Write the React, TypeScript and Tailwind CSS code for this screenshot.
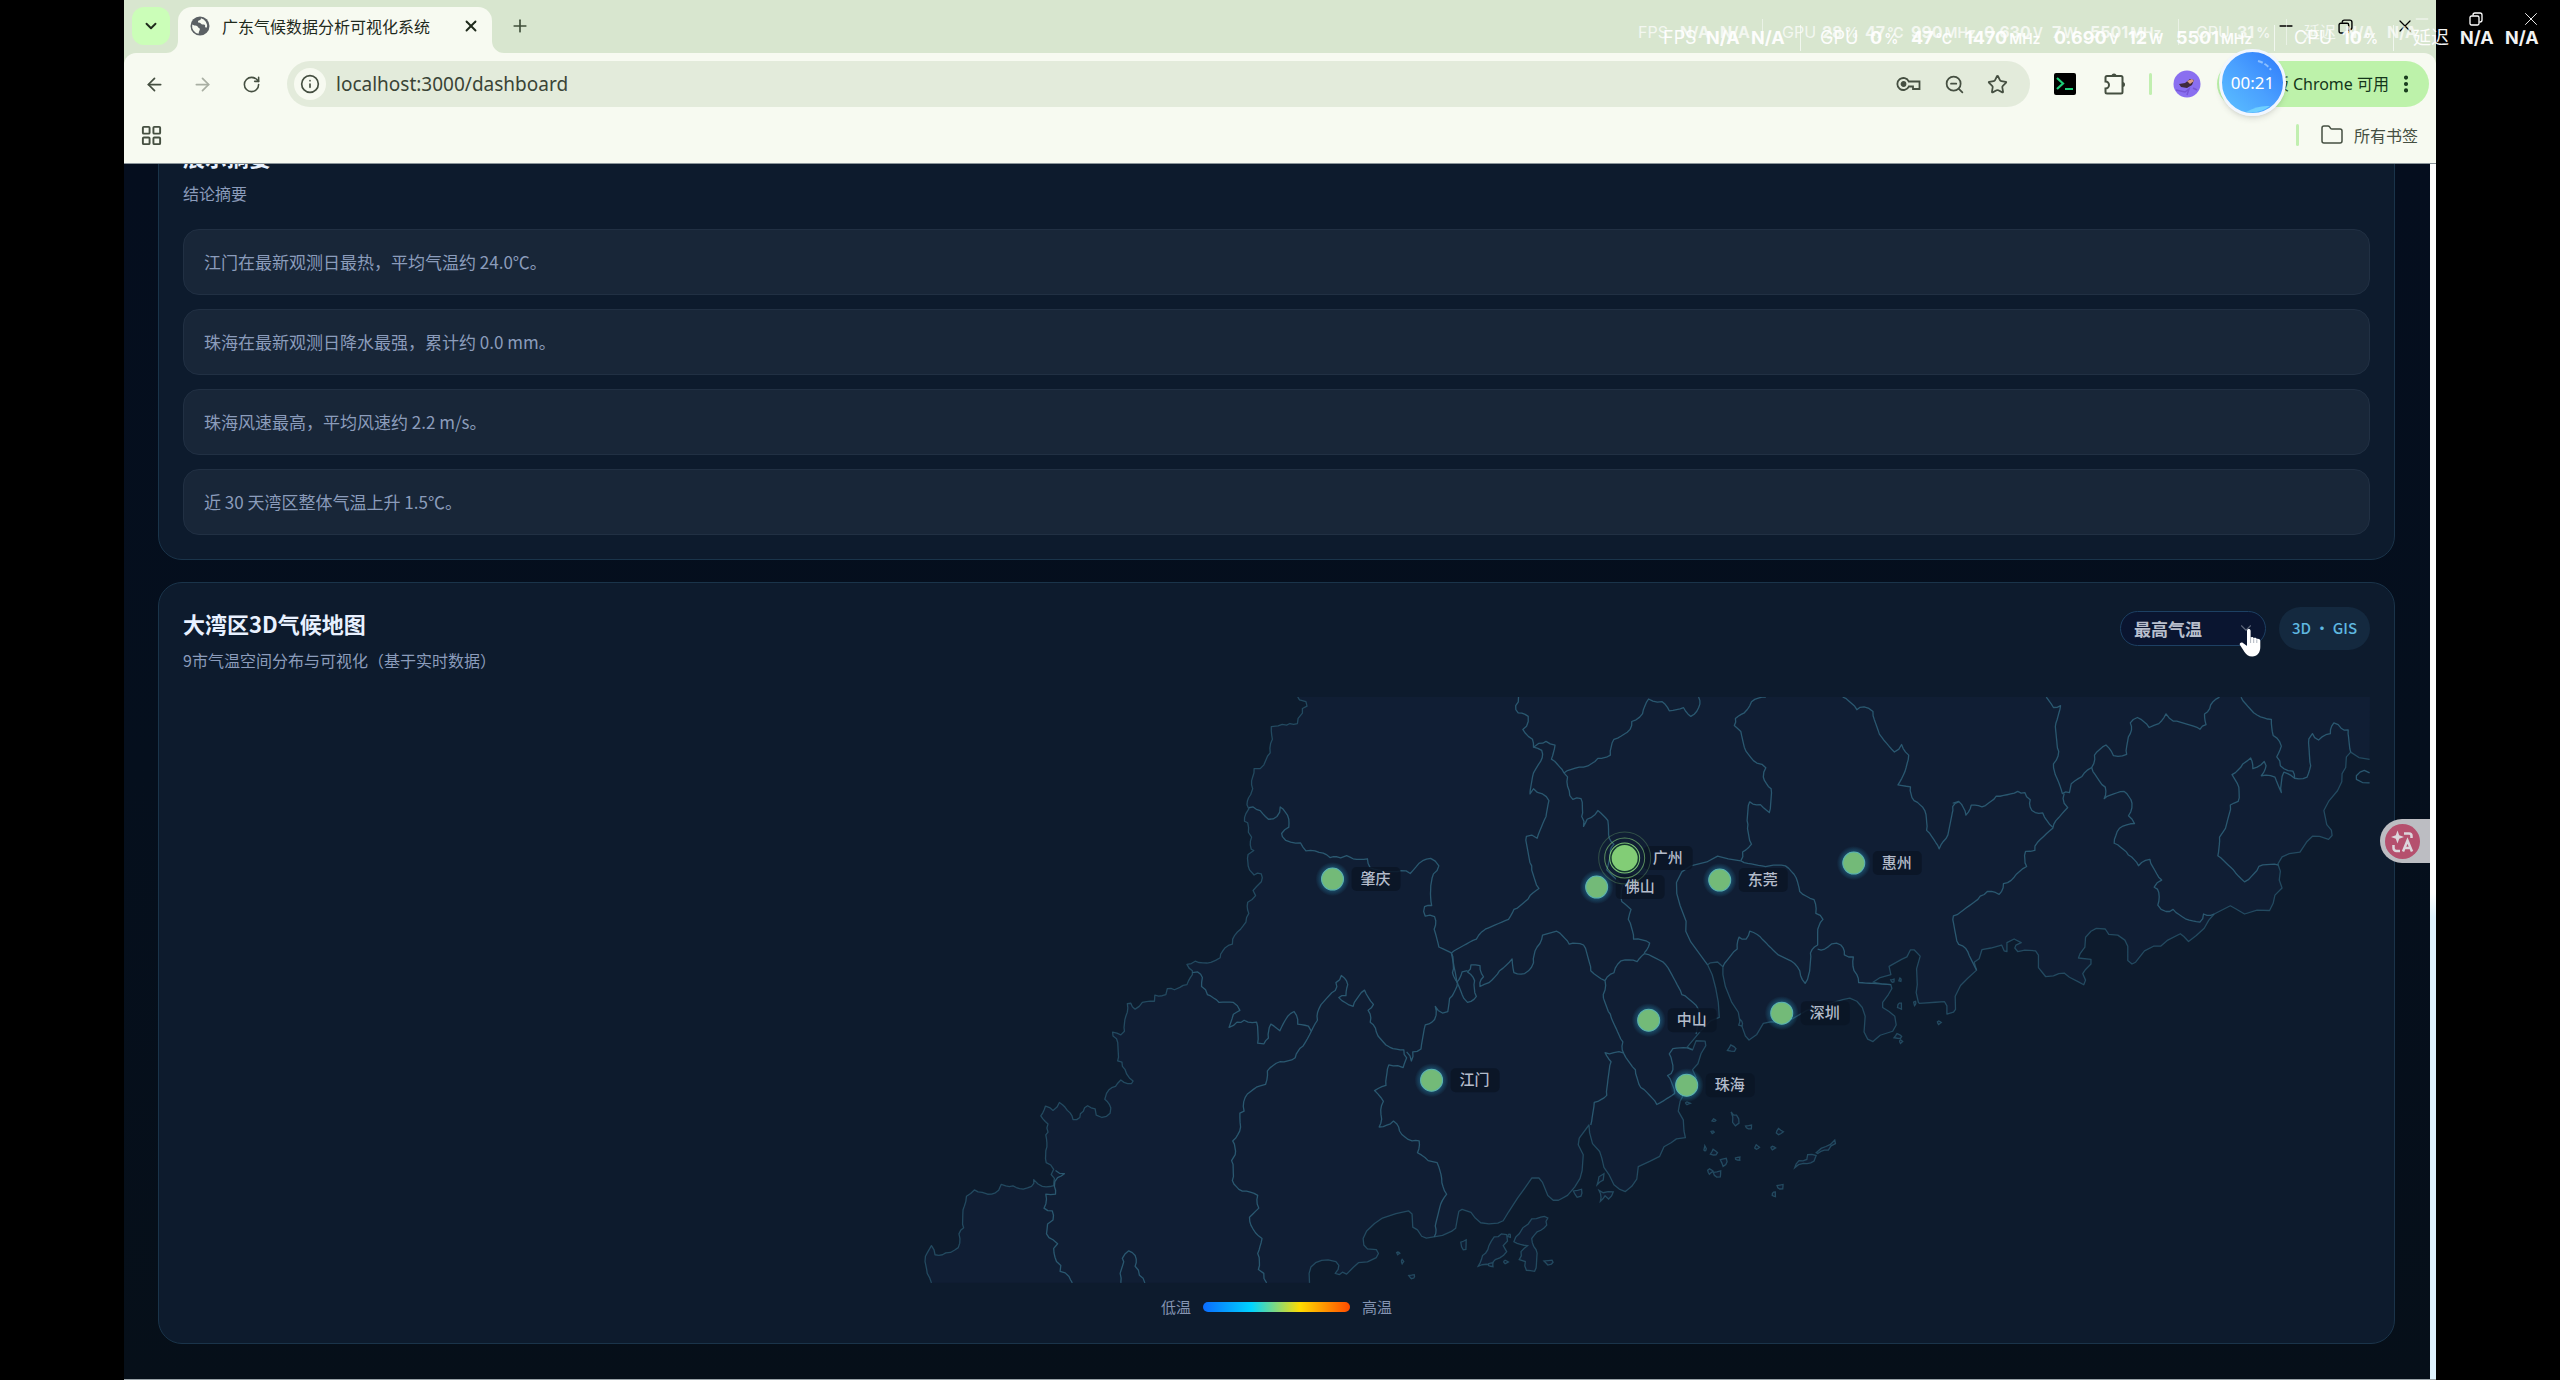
import {
  ArrowLeft,
  ArrowRight,
  ChevronDown,
  EllipsisVertical,
  Folder,
  Info,
  LayoutGrid,
  Minus,
  Plus,
  RotateCw,
  Star,
  X,
  ZoomOut,
} from 'lucide-react';

type Point = [number, number];
type Sheet = 'west' | 'mid' | 'east';

// Each map sheet was digitised on its own grid: [origin x, origin y, scale x, scale y]
const SHEETS: Record<Sheet, [number, number, number, number]> = {
  west: [716, -17, 2.8, 2.529],
  mid: [1216, -17, 2.8, 2.529],
  east: [1716, -17, 2.8, 2.8],
};

function project(sheet: Sheet, points: string): Point[] {
  const [ox, oy, sx, sy] = SHEETS[sheet];
  return points
    .trim()
    .split(/\s+/)
    .map((pair) => {
      const [x, y] = pair.split(',').map(Number);
      return [ox + x / sx, oy + y / sy];
    });
}

// Breaks long straight runs into a slightly ragged border line
function roughen(points: Point[]): Point[] {
  const out: Point[] = [];
  points.forEach(([x, y], i) => {
    out.push([x, y]);
    const next = points[i + 1];
    if (!next) return;
    const dx = next[0] - x;
    const dy = next[1] - y;
    const length = Math.hypot(dx, dy);
    const steps = Math.floor(length / 3.5);
    for (let s = 1; s < steps; s++) {
      const wobble = Math.sin(x * 12.9 + y * 78.2 + s * 37.7) * 1.3;
      out.push([x + (dx * s) / steps - (dy / length) * wobble, y + (dy * s) / steps + (dx / length) * wobble]);
    }
  });
  return out;
}

function toPath(points: Point[], closed = false) {
  return 'M' + points.map(([x, y]) => `${x.toFixed(1)} ${y.toFixed(1)}`).join('L') + (closed ? 'Z' : '');
}

const PROVINCE_EDGE = roughen(
  project(
    'west',
    `1115,43 1120,50 1138,55 1141,66 1128,72 1128,84 1116,97 1114,110 1093,110 1084,114 1060,116 1041,118 1044,150 1038,184 1026,202
    1010,224 993,224 989,245 989,275 983,290 973,315 978,326 970,338 966,357 975,361 977,385 986,397 985,428 992,431 976,441 980,480
    993,493 1013,490 1013,510 1000,522 990,532 997,545 975,562 978,590 970,612 955,630 933,655 932,668 905,685 898,702 885,709 872,714
    828,711 805,719 820,735 820,745 805,770 785,777 770,783 750,780 746,795 715,797 714,812 680,815 660,832 648,817 638,818 634,850
    630,888 620,897 597,890 598,900 608,907 611,963 623,966 632,985 654,1014 650,1020 620,1011 605,1027 580,1045 575,1060 592,1082
    590,1095 567,1106 551,1100 548,1084 527,1076 515,1090 505,1106 486,1111 470,1088 448,1068 430,1088 409,1077 396,1102 416,1122
    416,1143 410,1150 413,1180 411,1220 432,1237 425,1250 434,1260 432,1278 400,1280 388,1274 376,1263 370,1280 347,1287 318,1279
    298,1279 285,1275 278,1290 247,1300 232,1295 210,1289 188,1305 182,1330 180,1385 167,1400 165,1435 155,1441 130,1448 100,1453
    90,1430 80,1445 72,1470 78,1500 90,1524`,
  ),
);

const COAST: Point[] = [
  ...project(
    'west',
    `1148,1524 1147,1500 1152,1484 1165,1473 1182,1467 1200,1466 1222,1470 1230,1480 1228,1490 1220,1500 1232,1503 1240,1497 1252,1502
    1270,1485 1285,1473 1310,1471 1335,1460 1341,1450 1335,1440 1310,1438 1300,1428 1298,1412 1308,1393 1330,1374 1352,1360 1390,1349
    1425,1342 1435,1350 1437,1383 1450,1390 1462,1406 1475,1411 1520,1404 1545,1394 1557,1386`,
  ),
  ...project(
    'mid',
    `162,1360 166,1343 175,1338 200,1346 212,1360 227,1372 250,1375 275,1373 290,1367 305,1345 330,1310 350,1285 370,1259 390,1259
    400,1270 415,1303 430,1315 445,1315 470,1303 490,1282 505,1260 511,1240 514,1200 500,1175 503,1158 530,1125 532,1145 540,1172
    560,1192 566,1208 572,1232 586,1250 600,1276 615,1287 632,1293 650,1280 664,1262 668,1230 700,1217 728,1204 740,1180 760,1170
    775,1160 800,1157 796,1140 794,1112 780,1090 785,1065 800,1040 830,1005 820,985 835,970 844,944 857,924 855,913 830,912 820,935
    805,928 840,890 870,862 895,853 892,815 885,780 875,745 862,720 870,715 890,713 905,725 905,745 912,775 930,815 948,840 952,860
    960,880 968,900 978,910 1000,896 1018,868 1040,864 1070,865 1100,856 1140,835 1215,815 1240,808 1260,804 1280,812 1295,828
    1303,850 1300,890 1310,908 1325,914 1345,898 1380,888 1390,872 1386,850 1370,838 1352,828 1352,815 1368,795 1378,780 1375,770
    1350,768 1325,764 1345,752 1375,745 1370,724 1405,706 1420,700 1430,682 1440,682 1457,698 1447,730 1449,770 1446,790 1452,815`,
  ),
  ...project(
    'east',
    `55,905 100,902 125,900 132,912 132,935 150,930 156,922 155,885 170,855 190,835 215,812 208,790 222,780 230,755 255,750 285,742
    292,758 300,760 300,735 320,725 340,735 325,742 322,750 330,760 350,756 380,758 388,770 388,805 400,820 408,830 430,828 445,822
    460,820 475,832 500,845 515,853 520,840 512,822 520,810 535,795 535,782 500,778 505,765 518,748 520,720 535,703 550,695 575,697
    585,712 610,714 630,728 638,745 638,785 650,795 660,790 685,758 710,745 730,745 750,728 785,710 795,718 808,732 830,715 852,695
    865,672 880,655 925,632 940,640 965,655 1000,644 1035,645 1045,625 1050,602 1070,582 1062,560 1065,535 1058,515 1070,495 1090,486
    1120,482 1140,452 1155,437 1175,438 1200,446 1210,435 1208,420 1195,405 1187,365 1200,340 1225,310 1237,285 1238,262 1248,245
    1250,215 1262,202 1285,217 1315,222`,
  ),
];

const LAND = toPath([...COAST, [2186, 0], ...PROVINCE_EDGE], true);

const BORDERS: [Sheet, string][] = [
  ['west', '437,1240 462,1248 443,1258 434,1280 437,1300 410,1300 405,1335 428,1342 430,1365 415,1375 412,1400 430,1415 443,1425 432,1437 440,1470 452,1480 450,1495 475,1508 484,1524'],
  ['west', '620,1524 618,1500 625,1480 624,1462 642,1443 660,1455 660,1482 672,1505 687,1524'],
  ['west', '978,323 990,321 1010,330 1033,352 1057,345 1066,321 1090,352 1090,372 1070,388 1072,396 1095,410 1123,412 1138,432 1175,436 1205,449 1235,450 1252,444 1270,452 1310,452 1318,475 1350,482 1405,482 1430,489 1455,463 1487,451 1500,458 1510,470 1495,490 1487,530 1490,570 1470,573 1472,597 1498,598 1497,630 1510,675 1545,690'],
  ['west', '820,740 835,738 848,752 846,775 862,795 895,815 935,815 953,835 935,845 923,878 945,865 965,860 1000,865 1003,918 1020,920 1033,905 1040,870 1065,887 1080,860 1105,838 1115,870 1145,875 1153,888 1170,860 1175,830 1220,785 1222,765 1237,747 1255,770 1250,798 1230,803 1270,825 1302,784 1327,820 1312,835 1318,865 1335,890 1372,928 1412,935 1420,955 1410,980 1395,975 1370,973 1362,1025 1330,1038 1355,1065 1348,1098 1350,1110 1343,1130 1383,1115 1400,1140 1435,1165 1455,1165 1450,1195 1480,1215 1505,1220 1518,1260 1532,1300 1515,1325 1500,1380 1497,1408'],
  ['west', '1153,888 1130,925 1108,955 1065,965 1030,988 1025,1022 1010,1026 968,1055 965,1090 953,1095 955,1130 933,1165 940,1200 930,1215 932,1265 960,1292 1003,1303 1006,1335 980,1358 990,1388 1015,1412 1003,1450 1005,1490 1020,1500 1028,1524'],
  ['west', '1420,940 1433,963 1437,940 1460,933 1472,872 1498,858 1500,825 1520,842 1535,838 1540,805 1562,765 1548,740 1545,690'],
  ['mid', '333,43 325,65 332,83 360,92 360,105 345,125 372,150 375,170 398,178 395,205 375,235 365,288 375,275 400,288 418,305 410,345 385,400 370,392 355,395 370,470 390,527 365,545 320,580 305,605 240,630 215,655 145,690'],
  ['mid', '375,170 390,160 410,155 435,165 425,200 460,235 470,245 475,280 485,302 508,300 510,345 515,370 525,352 555,330 583,355 585,390 600,415 590,440 580,480 625,520 622,560 648,580 640,605 655,655 700,665 685,690'],
  ['mid', '460,235 515,220 555,198 590,190 600,150 645,125 650,105 680,85 697,48 735,55 755,78 795,70 815,92 837,70 837,43'],
  ['mid', '1025,43 985,55 965,83 940,97 937,115 955,130 965,170 1000,210 1025,222 1018,245 1040,275 1035,335 1010,315 980,308 975,365 985,415 960,435 955,457'],
  ['mid', '955,457 1035,470 1080,470 1110,500 1120,535 1160,555 1165,590 1185,605 1170,640 1170,670 1150,690 1145,745 1135,767 1120,735 1095,710 1060,695 1010,650 980,635 970,655 950,650 945,680 905,725'],
  ['mid', '1170,680 1190,680 1210,667 1235,670 1245,695 1270,700 1272,735 1285,765 1375,770'],
  ['mid', '1240,43 1280,75 1300,68 1325,80 1350,145 1385,182 1405,163 1425,190 1410,240 1395,265 1430,270 1440,305 1470,330 1475,380 1510,427 1530,400 1548,320 1565,308'],
  ['mid', '145,690 160,760 180,805 190,815 215,800 210,760 190,738 200,720 225,722 235,750 225,775 250,765 280,735 315,705 320,740 350,742 375,715 385,675 400,645 440,635 475,668 515,670 535,735 575,760'],
  ['mid', '160,765 175,738 190,735'],
  ['mid', '575,760 600,740 620,710 665,712 685,692 745,720 790,795 835,830 840,850 830,895'],
  ['mid', '575,760 570,795 590,845 625,915 628,945 660,985 675,1030 720,1073 770,1045 750,1000 765,985 755,945 765,932 805,930 820,935'],
  ['mid', '628,943 600,942 575,942 592,965 580,1050 545,1068 535,1125'],
  ['east', '148,345 165,340 185,378 200,350 230,355 270,325 330,312 350,315 365,335 370,365 400,372 428,412'],
  ['east', '410,48 430,77 450,72 437,120 445,200 430,235 440,275 455,318 475,315 480,290 510,270 537,245 545,210 577,182 598,212 635,208 645,150 645,120 665,105 698,133 725,122 745,95 765,115 840,138 857,125 853,95 870,70 895,48'],
  ['east', '460,318 460,345 470,357 445,385 428,415 385,455 378,477 352,480 355,522 320,552 290,570 278,600 245,592 225,605 150,660 165,740 190,760 215,812'],
  ['east', '537,245 575,300 572,332 628,312 650,345 640,380 657,402 615,415 600,457 640,490 668,520 700,502 733,560 712,580 725,595 722,630 745,648 765,642 810,672 840,678 850,655 880,655'],
  ['east', '955,48 1000,98 1040,110 1045,155 1068,185 1055,215 1065,240 1100,255 1105,275 1140,272 1150,240 1145,165 1155,150 1172,168 1205,150 1215,120 1235,135 1255,140 1262,202'],
  ['east', '1060,518 1005,522 965,565 940,540 890,492 895,440 905,425 925,350 947,340 945,290 930,265 960,235 982,218 988,248 1020,228 1025,240 1012,268 1050,272 1068,315 1075,258 1105,275'],
];

// Smooth stretches: the Pearl River banks and the bay at the eastern edge
const WATER_LINES: [Sheet, string][] = [
  ['mid', '955,457 920,452 890,445 860,460 815,470 790,485 775,512 776,540 785,570 802,610 801,635 815,662 862,720'],
  ['east', '1315,260 1300,253 1288,258 1278,268 1278,278 1295,287 1315,288'],
];

const BIG_ISLANDS: [Sheet, string][] = [
  ['mid', '415,1360 412,1378 385,1395 370,1412 382,1440 378,1495 355,1492 352,1470 335,1465 340,1445 358,1430 320,1420 335,1400 345,1385 360,1375 370,1362 395,1358'],
  ['mid', '300,1402 285,1400 265,1408 250,1430 232,1455 220,1482 255,1478 268,1465 300,1445 290,1430 302,1418'],
  ['mid', '1106,1233 1118,1215 1140,1212 1142,1200 1166,1202 1160,1216 1130,1222'],
  ['mid', '1166,1195 1180,1184 1206,1174 1218,1163 1220,1172 1200,1188 1170,1197'],
  ['mid', '928,1092 935,1100 943,1100 950,1120 940,1127 932,1118'],
  ['mid', '558,1290 570,1296 598,1294 585,1312 575,1304 562,1318'],
  ['mid', '553,1276 558,1256 572,1248 570,1264'],
];

// Islets: centre x, centre y, half width, half height on the mid sheet
const ISLETS: [number, number, number, number][] = [
  [180, 1428, 8, 13], [418, 1472, 12, 6], [500, 1297, 12, 10], [978, 1130, 9, 5], [1063, 1142, 9, 7],
  [880, 1195, 9, 7], [908, 1218, 9, 10], [890, 1249, 11, 8], [869, 1242, 7, 6], [1000, 1181, 6, 5],
  [1045, 1183, 6, 4], [947, 1210, 7, 4], [930, 932, 11, 8], [1066, 1281, 9, 6], [1048, 1300, 5, 6],
  [1395, 901, 10, 6], [1403, 914, 4, 4], [1510, 866, 5, 4], [1400, 824, 6, 8], [1380, 760, 5, 4],
  [1401, 758, 3, 4], [1442, 817, 3, 5], [855, 1185, 3, 6], [876, 1143, 4, 3], [880, 1113, 5, 3],
  [806, 1070, 6, 3], [35, 1508, 8, 5], [8, 1470, 3, 5], [-4, 1449, 4, 3], [955, 868, 5, 8],
  [307, 1405, 4, 4], [297, 1471, 6, 4], [256, 1478, 7, 5],
];

function isletPath([cx, cy, rx, ry]: [number, number, number, number]) {
  const ring: Point[] = [0, 1, 2, 3, 4, 5, 6].map((i) => {
    const angle = (i / 7) * Math.PI * 2;
    const r = 1 + 0.28 * Math.sin(cx + i * 2.7);
    return [1216 + (cx + Math.cos(angle) * rx * r) / 2.8, -17 + (cy + Math.sin(angle) * ry * r) / 2.529];
  });
  return toPath(ring, true);
}

const CITIES = [
  { name: '肇庆', x: 1149, y: 182 },
  { name: '惠州', x: 1670, y: 166 },
  { name: '东莞', x: 1536, y: 183 },
  { name: '佛山', x: 1413, y: 190 },
  { name: '中山', x: 1465, y: 323 },
  { name: '深圳', x: 1598, y: 316 },
  { name: '江门', x: 1248, y: 383 },
  { name: '珠海', x: 1503, y: 388 },
  { name: '广州', x: 1441, y: 161, hot: true },
];

const SUMMARY = [
  '江门在最新观测日最热，平均气温约 24.0℃。',
  '珠海在最新观测日降水最强，累计约 0.0 mm。',
  '珠海风速最高，平均风速约 2.2 m/s。',
  '近 30 天湾区整体气温上升 1.5℃。',
];

type Stat = { text: string; unit?: string; width: string; label?: boolean };

const LIVE_STATS: Stat[] = [
  { text: 'FPS', width: 'w-[43px]', label: true },
  { text: 'N/A', width: 'w-[45px]' },
  { text: 'N/A', width: 'w-[49px]' },
  { text: '|', width: 'w-[20px]', label: true },
  { text: 'GPU', width: 'w-[50px]', label: true },
  { text: '0', unit: '%', width: 'w-[41px]' },
  { text: '47', unit: '°C', width: 'w-[54px]' },
  { text: '1470', unit: 'MHz', width: 'w-[89px]' },
  { text: '0.690', unit: 'V', width: 'w-[74px]' },
  { text: '12', unit: 'W', width: 'w-[48px]' },
  { text: '5501', unit: 'MHz', width: 'w-[98px]' },
  { text: '|', width: 'w-[20px]', label: true },
  { text: 'CPU', width: 'w-[48px]', label: true },
  { text: '10', unit: '%', width: 'w-[51px]' },
  { text: '|', width: 'w-[20px]', label: true },
  { text: '延迟', width: 'w-[47px]', label: true },
  { text: 'N/A', width: 'w-[45px]' },
  { text: 'N/A', width: 'w-[33px]' },
];

const RECORDED_STATS: Stat[] = [
  { text: 'FPS', width: 'w-[42px]', label: true },
  { text: 'N/A', width: 'w-[40px]' },
  { text: 'N/A', width: 'w-[42px]' },
  { text: '|', width: 'w-[20px]', label: true },
  { text: 'GPU', width: 'w-[40px]', label: true },
  { text: '28', unit: '%', width: 'w-[43px]' },
  { text: '47', unit: '°C', width: 'w-[46px]' },
  { text: '990', unit: 'MHz', width: 'w-[73px]' },
  { text: '0.630', unit: 'V', width: 'w-[68px]' },
  { text: '7', unit: 'W', width: 'w-[38px]' },
  { text: '5501', unit: 'MHz', width: 'w-[88px]' },
  { text: '|', width: 'w-[18px]', label: true },
  { text: 'CPU', width: 'w-[41px]', label: true },
  { text: '31', unit: '%', width: 'w-[49px]' },
  { text: '|', width: 'w-[18px]', label: true },
  { text: '延迟', width: 'w-[41px]', label: true },
  { text: 'N/A', width: 'w-[42px]' },
  { text: 'N/A', width: 'w-[28px]' },
];

export default function App() {
  return (
    <div className="relative min-h-screen overflow-hidden bg-black px-[124px] font-['Noto_Sans_CJK_SC',sans-serif]">
      <div className="flex min-h-screen flex-col">
        <TabStrip />
        <Toolbar />
        <div className="flex flex-1 border-b border-[#9aa3a8]">
          <Dashboard />
          <div className="w-1.5 bg-[linear-gradient(#ffffff_60%,#dff3ff_62%)]"></div>
        </div>
      </div>
      <StatsOverlay stats={RECORDED_STATS} className="top-5 right-[145px] text-base opacity-70" />
      <StatsOverlay stats={LIVE_STATS} className="top-[26px] right-[22px] text-lg opacity-95" />
      <div className="absolute top-2 right-[18px] flex items-center gap-[37px] text-white">
        <button aria-label="最小化窗口"><Minus size={20} strokeWidth={1} /></button>
        <button aria-label="还原窗口"><RestoreIcon size={14} /></button>
        <button aria-label="关闭窗口"><X size={22} strokeWidth={1} /></button>
      </div>
    </div>
  );
}

function StatsOverlay({ stats, className }: { stats: Stat[]; className: string }) {
  return (
    <div className={`pointer-events-none absolute flex h-6 items-center leading-6 whitespace-nowrap text-white font-['Inter','Noto_Sans_CJK_SC',sans-serif] ${className}`}>
      {stats.map((stat, i) =>
        stat.text === '|' ? (
          <span key={i} className={`flex ${stat.width}`}>
            <i className="h-[26px] w-px bg-white/70"></i>
          </span>
        ) : (
          <span key={i} className={`${stat.width} ${stat.label ? 'font-normal' : 'font-bold'}`}>
            {stat.text}
            {stat.unit && <small className="ml-0.5 text-sm font-semibold">{stat.unit}</small>}
          </span>
        ),
      )}
    </div>
  );
}

function RestoreIcon({ size }: { size: number }) {
  return (
    <svg width={size} height={size} viewBox="0 0 14 14" fill="none" stroke="currentColor" strokeWidth="1.3">
      <rect x="1" y="4" width="9" height="9" rx="1.5" />
      <path d="M4 3.5V3a2 2 0 0 1 2-2h5a2 2 0 0 1 2 2v5a2 2 0 0 1-2 2h-.5" />
    </svg>
  );
}

function TabStrip() {
  return (
    <header className="flex h-[53px] items-end bg-[#d8e6cf] pl-2 text-[#1f2a1c]">
      <button aria-label="搜索标签页" className="mb-2 flex h-[38px] w-[38px] items-center justify-center rounded-xl bg-[#cbfeb8]">
        <ChevronDown size={18} strokeWidth={2.5} />
      </button>
      <TabFlare className="-scale-x-100 ml-[-4px]" />
      <div className="flex h-[46px] w-[314px] items-center rounded-t-[14px] bg-[#f7faf1] pr-2 pb-2 pl-3">
        <GlobeIcon />
        <span className="ml-3 flex-1 text-base leading-5 whitespace-nowrap">广东气候数据分析可视化系统</span>
        <button aria-label="关闭标签页" className="flex w-[26px] justify-center">
          <X size={18} strokeWidth={2.5} />
        </button>
      </div>
      <TabFlare className="" />
      <button aria-label="新建标签页" className="mb-[17px] ml-[6px] text-[#3f4f3a]">
        <Plus size={20} strokeWidth={2} />
      </button>
      <div className="mr-[21px] mb-[17px] ml-auto flex items-center gap-[42px] text-black">
        <button aria-label="最小化"><Minus size={20} strokeWidth={2} /></button>
        <button aria-label="还原"><RestoreIcon size={15} /></button>
        <button aria-label="关闭"><X size={20} strokeWidth={1.5} /></button>
      </div>
    </header>
  );
}

function TabFlare({ className }: { className: string }) {
  return (
    <svg className={className} width="12" height="12" viewBox="0 0 12 12" fill="#f7faf1">
      <path d="M0 0a12 12 0 0 0 12 12H0z" />
    </svg>
  );
}

function GlobeIcon() {
  return (
    <svg width="20" height="20" viewBox="0 0 20 20">
      <circle cx="10" cy="10" r="9.5" fill="#5b6064" />
      <path
        d="M2.2 8.5c1.5 1 3 1 4.300 1.300 1.500.4 1.200 1.800 2.500 2.200 1.200.4 1 1.500.5 2.500-.5 1-.8 2-.9 3.300A8 8 0 0 1 2.200 8.500zM11 2.200c-.3 1-.2 1.700-1.500 2-1.300.3-1.800 1-1.300 2 .5.900 2 .3 2.600 1.300.5.900 1.500 1.300 2.600 1 1.300-.3 2 .6 1.700 1.700-.3 1 .5 1.600 1.800 1.300A8 8 0 0 0 11 2.200z"
        fill="#f7faf1"
      />
    </svg>
  );
}

function Toolbar() {
  return (
    <div className="bg-[#d8e6cf]">
      <div className="rounded-t-xl border-b border-[#8b959a] bg-[#f7faf1] pt-2 text-[#454f41]">
        <div className="flex h-[46px] items-center pr-[7px] pl-5">
          <button aria-label="返回" className="w-12"><ArrowLeft size={21} /></button>
          <button aria-label="前进" className="w-12 text-[#a9afa3]"><ArrowRight size={21} /></button>
          <button aria-label="重新加载" className="w-[47px] pl-0.5"><RotateCw size={19} /></button>
          <div className="flex h-full flex-1 items-center rounded-full bg-[#e3ebdb] pr-[22px] pl-[7px]">
            <button aria-label="查看网站信息" className="flex size-8 items-center justify-center rounded-full bg-[#f7faf1]">
              <Info size={20} />
            </button>
            <label className="ml-2.5 flex-1 text-[19px] leading-6 font-['Noto_Sans',sans-serif]">
              <span className="sr-only">地址栏</span>
              <input className="w-full bg-transparent text-[#3a4436] outline-none" defaultValue="localhost:3000/dashboard" />
            </label>
            <div className="flex items-center gap-[22px]">
              <button aria-label="密码"><KeyIcon /></button>
              <button aria-label="缩放"><ZoomOut size={21} /></button>
              <button aria-label="收藏"><Star size={21} /></button>
            </div>
          </div>
          <button aria-label="终端扩展" className="ml-6 flex size-[22px] items-center justify-center rounded-xs bg-black">
            <svg width="18" height="14" viewBox="0 0 18 14" fill="none" stroke="#1fd07a" strokeWidth="2.200">
              <path d="M1 1l6 5.500L1 12M9 12h8" />
            </svg>
          </button>
          <button aria-label="扩展程序" className="ml-[27px]"><ExtensionIcon /></button>
          <i className="ml-[22px] h-[22px] w-[3px] rounded-full bg-[#c1efb0]"></i>
          <button aria-label="个人资料" className="mr-4 ml-[21px]"><AvatarIcon /></button>
          <button className="relative flex h-full w-[212px] items-center justify-end rounded-full bg-[#bdf2aa] pr-3 text-base whitespace-nowrap text-[#14361a] font-['Noto_Sans','Noto_Sans_CJK_SC',sans-serif]">
            <span>新版 Chrome 可用</span>
            <EllipsisVertical size={22} strokeWidth={2.5} className="ml-1.5" />
            <span className="absolute top-[-12px] left-[2px] flex size-[67px] items-center justify-center rounded-full border-[3px] border-[#f1f6ff] bg-linear-to-tr from-[#5cc0ff] via-[#4aa0ff] to-[#2f78fa] text-[17px] text-white shadow-md">
              00:21
              <svg className="absolute inset-0" width="61" height="61" viewBox="0 0 61 61" fill="none">
                <path d="M24 60q12-7 24-6-10 8-24 6z" fill="#6fd0ff" />
                <path d="M36 9q8 2 13 9" stroke="#8cc0ff" strokeWidth="2" strokeDasharray="5 2" />
              </svg>
            </span>
          </button>
        </div>
        <div className="flex h-14 items-center pr-[18px] pl-4">
          <button aria-label="应用"><LayoutGrid size={23} strokeWidth={2} /></button>
          <i className="ml-auto h-[22px] w-[3px] rounded-full bg-[#c1efb0]"></i>
          <button className="ml-[21px] flex items-center gap-2.5 text-base">
            <Folder size={24} strokeWidth={1.5} />
            所有书签
          </button>
        </div>
      </div>
    </div>
  );
}

function KeyIcon() {
  return (
    <svg width="26" height="16" viewBox="0 0 26 16" fill="none" stroke="currentColor" strokeWidth="1.800">
      <path d="M12.800 5.500A6 6 0 1 0 12.800 10.500H17V13h6.500V5.500z" />
      <circle cx="7.500" cy="8" r="2" fill="currentColor" />
    </svg>
  );
}

function ExtensionIcon() {
  return (
    <svg width="24" height="24" viewBox="0 0 24 24" fill="none" stroke="currentColor" strokeWidth="2">
      <path d="M4 4h14a1.500 1.500 0 0 1 1.500 1.500V20a1.500 1.500 0 0 1-1.500 1.500H4A1.500 1.500 0 0 1 2.500 20v-3.500a3.500 3.500 0 0 0 0-7v-4A1.500 1.500 0 0 1 4 4z" />
      <path d="M8.500 4a2.500 2.500 0 0 1 5 0zM19.500 10a2.500 2.500 0 0 1 0 5z" fill="currentColor" stroke="none" />
    </svg>
  );
}

function AvatarIcon() {
  return (
    <svg width="28" height="28" viewBox="0 0 28 28">
      <circle cx="14" cy="14" r="13.500" fill="#8a6ff0" />
      <path d="M3 20l9 2 4-3-2 6M20 18l4 2" stroke="#7656d6" strokeWidth="1.500" fill="none" />
      <path d="M6 14l6-1 5-4 4 1-2 5-5 3-6-1z" fill="#402a3c" />
      <path d="M14 11l5-2 2 2-4 3z" fill="#d99a86" />
    </svg>
  );
}

function Dashboard() {
  return (
    <main className="relative min-w-0 flex-1 overflow-hidden bg-linear-to-b from-[#050e1e] via-[#050f1d] to-[#060f19] pr-[35px] pb-8 pl-[34px]">
      <div className="mt-[-49px] flex flex-col gap-[22px]">
        <section className="rounded-3xl border border-[#1a344a] bg-[#0d1b2d] p-6">
          <CardHeading title="展示摘要" subtitle="结论摘要" />
          <ul className="mt-6 flex flex-col gap-3.5">
            {SUMMARY.map((line) => (
              <li key={line} className="flex h-[66px] items-center rounded-2xl border border-[#213043] bg-[#182638] px-5 text-[17px] text-[#8b9cbb]">
                {line}
              </li>
            ))}
          </ul>
        </section>
        <section className="rounded-3xl border border-[#1a344a] bg-[#0d1b2d] p-6">
          <div className="flex items-start justify-between">
            <CardHeading title="大湾区3D气候地图" subtitle="9市气温空间分布与可视化（基于实时数据）" />
            <div className="flex items-center gap-[13px]">
              <MetricSelect />
              <span className="flex h-[43px] w-[91px] items-center justify-center rounded-full bg-[#14293f] text-[15px] font-medium whitespace-nowrap text-[#5fb8e0]">
                3D · GIS
              </span>
            </div>
          </div>
          <ClimateMap />
          <div className="mt-3 flex h-6 items-center justify-center gap-3 text-[15px] text-[#8494b2]">
            <span>低温</span>
            <div className="h-2.5 w-[147px] rounded-full bg-[linear-gradient(90deg,#0a6cff,#00d4ff_33%,#ffdc00_66%,#ff4b00)]"></div>
            <span>高温</span>
          </div>
        </section>
      </div>
      <button aria-label="翻译" className="absolute top-[655px] right-0 flex h-11 w-[50px] items-center rounded-l-full bg-[#bcbdc2] pl-[5px]">
        <TranslateIcon />
      </button>
    </main>
  );
}

function CardHeading({ title, subtitle }: { title: string; subtitle: string }) {
  return (
    <div>
      <h2 className="text-[22px] leading-8 font-bold text-[#e8f1ff]">{title}</h2>
      <p className="mt-[9px] text-base leading-6 text-[#8b9cbb]">{subtitle}</p>
    </div>
  );
}

function MetricSelect() {
  return (
    <div className="relative text-[#b9bfcd]">
      <select
        aria-label="气候指标"
        className="h-[35px] w-[146px] appearance-none rounded-full border border-[#1d4063] bg-[#0a1530] px-[13px] text-[17px] leading-6 font-bold"
      >
        <option>最高气温</option>
        <option>最低气温</option>
        <option>平均气温</option>
      </select>
      <ChevronDown size={18} strokeWidth={1.5} className="pointer-events-none absolute top-2 right-[11px] text-[#5b6478]" />
      <svg className="pointer-events-none absolute top-[18px] right-[4px]" width="23" height="28" viewBox="0 0 23 28" fill="#ffffff">
        <path d="M8 2c0-2.600 3.600-2.600 3.600 0v6.500c.8-.9 2.900-.6 3.100.7.9-.8 2.900-.4 3.100.9 1.600-.7 3.500.2 3.500 2V18c0 5.500-3 9.500-8 9.500-4 0-6-1.800-7.800-4.500L1 16c-.9-1.500.9-3.300 3-2l4 3z" />
        <path d="M11.600 8.500V14M14.700 9.500V14M17.800 10.500V14" stroke="#8d95a3" strokeWidth=".7" />
      </svg>
    </div>
  );
}

function ClimateMap() {
  return (
    <svg className="mt-[25px] block h-auto w-full" viewBox="0 0 2186 586" role="img" aria-label="大湾区气温分布图">
      <defs>
        <radialGradient id="city-glow">
          <stop offset="0.600" stopColor="#2a8fb8" stopOpacity="0.450" />
          <stop offset="1" stopColor="#2a8fb8" stopOpacity="0" />
        </radialGradient>
      </defs>
      <path d={LAND} fill="#101e34" />
      <g fill="none" stroke="#2a5870" strokeWidth="1.300" strokeLinejoin="round">
        <path d={toPath(PROVINCE_EDGE)} stroke="#234a60" />
        <path d={toPath(COAST)} stroke="#234a60" />
        {BORDERS.map(([sheet, points]) => (
          <path key={points} d={toPath(roughen(project(sheet, points)))} />
        ))}
        {WATER_LINES.map(([sheet, points]) => (
          <path key={points} d={toPath(project(sheet, points))} />
        ))}
      </g>
      <g fill="#101e34" stroke="#234a60" strokeWidth="1.300">
        {BIG_ISLANDS.map(([sheet, points]) => {
          const shore = project(sheet, points);
          return <path key={points} d={toPath(roughen([...shore, shore[0]]), true)} />;
        })}
        {ISLETS.map((islet) => (
          <path key={islet.join()} d={isletPath(islet)} />
        ))}
      </g>
      {CITIES.map((city) => (
        <g key={city.name}>
          <rect x={city.x + 19} y={city.y - 12} width="49" height="24" rx="5" fill="#0a1526" fillOpacity="0.850" />
          {city.hot ? (
            <g fill="none" stroke="#7fc477">
              <circle cx={city.x} cy={city.y} r="26" strokeOpacity="0.300" />
              <circle cx={city.x} cy={city.y} r="20" strokeOpacity="0.650" />
              <circle cx={city.x} cy={city.y} r="15" fill="#12352f" />
              <circle cx={city.x} cy={city.y} r="13" fill="#82cd76" stroke="none" />
            </g>
          ) : (
            <g>
              <circle cx={city.x} cy={city.y} r="17" fill="url(#city-glow)" />
              <circle cx={city.x} cy={city.y} r="11" fill="#73ba78" stroke="#5bb3b0" />
            </g>
          )}
          <text x={city.x + 43} y={city.y + 5} textAnchor="middle" fontSize="15" fontWeight="500" fill="#b4bccb">
            {city.name}
          </text>
        </g>
      ))}
    </svg>
  );
}

function TranslateIcon() {
  return (
    <svg width="35" height="35" viewBox="0 0 35 35" fill="none">
      <circle cx="17.500" cy="17.500" r="17.500" fill="#b5506e" />
      <path d="M12.500 6.500l1.700 4.800 4.800 1.700-4.800 1.700-1.700 4.800-1.700-4.800L6 13l4.800-1.700z" fill="#dcd6dc" />
      <path d="M19 9.500h5a2.500 2.500 0 0 1 2.500 2.500v2M8.500 21v3a3 3 0 0 0 3 3H15" stroke="#dcd6dc" strokeWidth="2.500" />
      <path d="M18 27.500l4.500-11 4.500 11M19.500 24h6" stroke="#dcd6dc" strokeWidth="2.500" />
    </svg>
  );
}
